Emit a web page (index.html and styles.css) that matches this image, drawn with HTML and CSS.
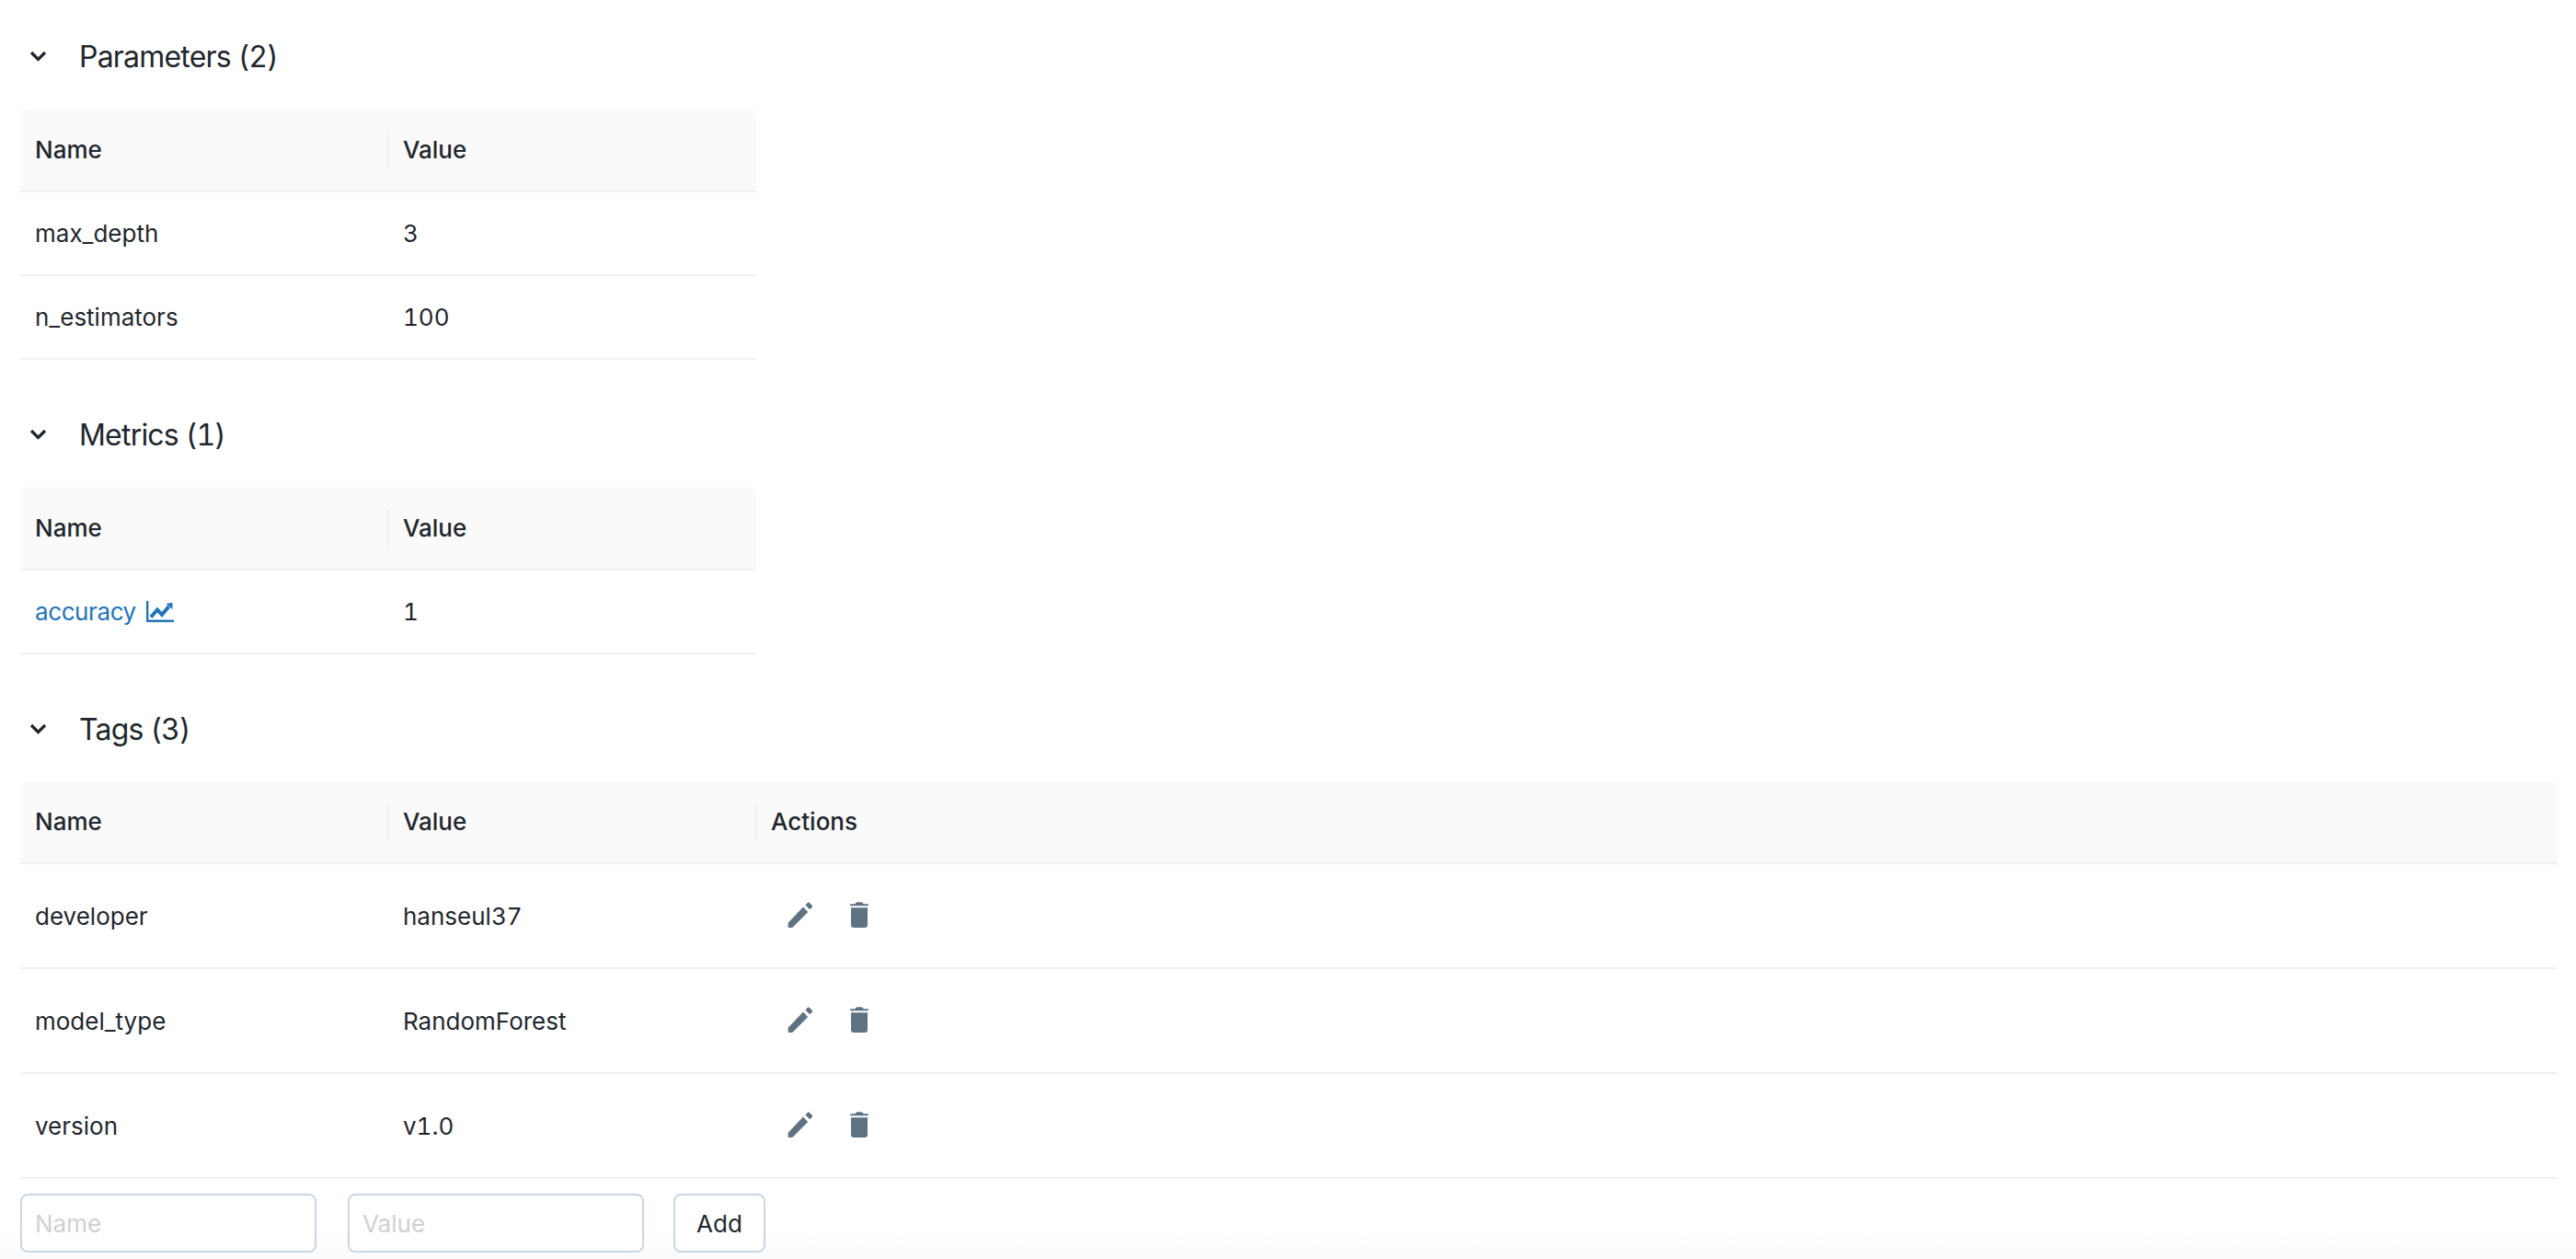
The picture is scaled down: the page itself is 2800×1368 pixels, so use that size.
FILE: index.html
```html
<!DOCTYPE html>
<html lang="en">
<head>
<meta charset="utf-8">
<title>Run details</title>
<link rel="stylesheet" href="styles.css">
</head>
<body>
<section class="section">
  <h2 class="heading"><svg class="chev" viewBox="0 0 19 12"><path d="M2 2l7.500 7.500L17 2"/></svg><span class="title">Parameters (2)</span></h2>
  <table class="tbl narrow">
    <colgroup><col class="c400"><col class="c400"></colgroup>
    <thead><tr><th><span class="th-in">Name</span></th><th class="sep"><span class="th-in">Value</span></th></tr></thead>
    <tbody>
      <tr><td>max_depth</td><td>3</td></tr>
      <tr><td>n_estimators</td><td>100</td></tr>
    </tbody>
  </table>
</section>
<section class="section">
  <h2 class="heading"><svg class="chev" viewBox="0 0 19 12"><path d="M2 2l7.500 7.500L17 2"/></svg><span class="title">Metrics (1)</span></h2>
  <table class="tbl narrow">
    <colgroup><col class="c400"><col class="c400"></colgroup>
    <thead><tr><th><span class="th-in">Name</span></th><th class="sep"><span class="th-in">Value</span></th></tr></thead>
    <tbody>
      <tr><td><a class="link" href="#">accuracy<svg class="chart" viewBox="0 0 30 23"><path class="fillc" d="M0 0h2.400v20.600H30V23H0z"/><path class="linec" d="M5 17.500l7-8 5 5.500 7.500-9"/><path class="fillc" d="M21.500 3l7-1.200V9z"/></svg></a></td><td>1</td></tr>
    </tbody>
  </table>
</section>
<section class="section tags">
  <h2 class="heading"><svg class="chev" viewBox="0 0 19 12"><path d="M2 2l7.500 7.500L17 2"/></svg><span class="title">Tags (3)</span></h2>
  <table class="tbl wide">
    <colgroup><col class="c400"><col class="c400"><col></colgroup>
    <thead><tr><th><span class="th-in">Name</span></th><th class="sep"><span class="th-in">Value</span></th><th class="sep"><span class="th-in">Actions</span></th></tr></thead>
    <tbody>
      <tr><td>developer</td><td>hanseul37</td><td><div class="actions"><svg class="pencil" viewBox="0 0 28 28"><path d="M.6 22.800L17 5.600l5.200 5.300L6 27.200q-.8.800-2 .800H1.600q-1 0-1-1z"/><path d="M19.400 3.400L22 .7q.8-.8 1.600 0l3.300 3.300q.6.700 0 1.400l-2.600 2.800z"/></svg><svg class="trash" viewBox="0 0 22 28"><path d="M6.500 2.300Q7 .2 9 .2h4q2 0 2.500 2.100H20q1 0 1 1t-1 1H2q-1 0-1-1t1-1z"/><path d="M2 6.300h18V25q0 3-3 3H5q-3 0-3-3z"/></svg></div></td></tr>
      <tr><td>model_type</td><td>RandomForest</td><td><div class="actions"><svg class="pencil" viewBox="0 0 28 28"><path d="M.6 22.800L17 5.600l5.200 5.300L6 27.200q-.8.800-2 .800H1.600q-1 0-1-1z"/><path d="M19.400 3.400L22 .7q.8-.8 1.600 0l3.300 3.300q.6.700 0 1.400l-2.600 2.800z"/></svg><svg class="trash" viewBox="0 0 22 28"><path d="M6.500 2.300Q7 .2 9 .2h4q2 0 2.500 2.100H20q1 0 1 1t-1 1H2q-1 0-1-1t1-1z"/><path d="M2 6.300h18V25q0 3-3 3H5q-3 0-3-3z"/></svg></div></td></tr>
      <tr><td>version</td><td>v1.0</td><td><div class="actions"><svg class="pencil" viewBox="0 0 28 28"><path d="M.6 22.800L17 5.600l5.200 5.300L6 27.200q-.8.800-2 .800H1.600q-1 0-1-1z"/><path d="M19.400 3.400L22 .7q.8-.8 1.600 0l3.300 3.300q.6.700 0 1.400l-2.600 2.800z"/></svg><svg class="trash" viewBox="0 0 22 28"><path d="M6.500 2.300Q7 .2 9 .2h4q2 0 2.500 2.100H20q1 0 1 1t-1 1H2q-1 0-1-1t1-1z"/><path d="M2 6.300h18V25q0 3-3 3H5q-3 0-3-3z"/></svg></div></td></tr>
    </tbody>
  </table>
  <form class="addform">
    <input class="field" type="text" placeholder="Name">
    <input class="field" type="text" placeholder="Value">
    <button class="add" type="button">Add</button>
  </form>
</section>
</body>
</html>
```
FILE: styles.css
```css
* { box-sizing: border-box; }
html, body { margin: 0; height: 100%; }
body {
  padding: 39px 20px 0 22px;
  background: #fff linear-gradient(to bottom, rgba(251, 251, 252, 0), #fbfbfc) left bottom / 100% 36px no-repeat;
  font-family: Inter, "Liberation Sans", sans-serif;
  font-size: 26px;
  font-variant-numeric: tabular-nums;
  color: #1f272d;
  overflow: hidden;
}
.section { margin-bottom: 59px; }
.tags { margin-bottom: 0; }
.heading {
  display: flex;
  align-items: center;
  height: 44px;
  margin: 0 0 35px;
  font-size: 32px;
  font-weight: 400;
  line-height: 44px;
  letter-spacing: -0.8px;
}
.title { padding-top: 2px; }
.chev { width: 19px; height: 12px; margin: 0 35px 0 10px; fill: none; stroke: #1f272d; stroke-width: 3.2; }
.tbl { border-collapse: separate; border-spacing: 0; table-layout: fixed; }
.narrow { width: 800px; }
.wide { width: 100%; }
.c400 { width: 400px; }
.tbl th {
  height: 91px;
  padding: 0;
  background: #fafafa;
  border-bottom: 2px solid #f0f0f0;
  font-weight: 500;
  text-align: left;
}
.wide th { height: 90px; }
.tbl th:first-child { border-top-left-radius: 8px; }
.tbl th:last-child { border-top-right-radius: 8px; }
.th-in { display: block; padding-left: 16px; line-height: 42px; }
.sep .th-in { border-left: 2px solid #f0f0f0; margin-left: -1px; padding-left: 15px; }
.tbl td {
  height: 91px;
  padding: 0 16px;
  border-bottom: 2px solid #f0f0f0;
}
.wide td { height: 114px; }
.link { color: #2374bb; text-decoration: none; display: inline-flex; align-items: center; letter-spacing: -0.4px; }
.chart { width: 30px; height: 23px; margin-left: 11px; }
.fillc { fill: #2374bb; }
.linec { fill: none; stroke: #2374bb; stroke-width: 4; }
.actions { display: flex; align-items: center; gap: 39px; padding-left: 18px; margin-top: -2px; }
.pencil { width: 28px; height: 28px; fill: #5f7281; }
.trash { width: 22px; height: 28px; fill: #5f7281; }
.addform { display: flex; gap: 34px; margin-top: 16px; }
.field {
  width: 322px;
  height: 64px;
  padding: 0 14px;
  border: 2px solid #c9d6e4;
  border-radius: 8px;
  background: #fff;
  font: inherit;
  color: inherit;
  outline: none;
}
.field::placeholder { color: #d0d0d0; opacity: 1; }
.add {
  width: 100px;
  height: 64px;
  margin-left: -2px;
  padding: 0;
  border: 2px solid #c9d6e4;
  border-radius: 8px;
  background: #fff;
  font: inherit;
  color: inherit;
}
```
